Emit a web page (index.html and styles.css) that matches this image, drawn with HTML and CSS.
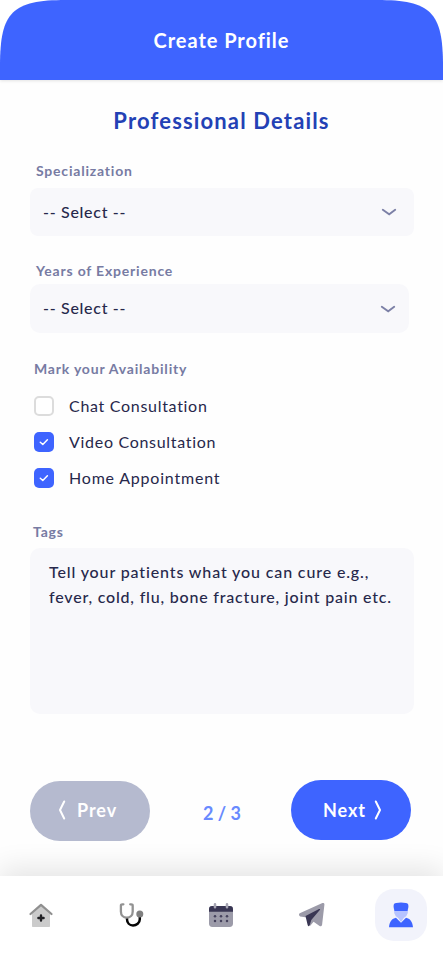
FILE: index.html
```html
<!DOCTYPE html>
<html lang="en">
<head>
<meta charset="utf-8">
<title>Create Profile</title>
<link rel="stylesheet" href="styles.css">
</head>
<body>
<div class="app">
  <header class="topbar-wrap"><div class="topbar"><h1>Create Profile</h1></div></header>
  <main class="form">
    <h2>Professional Details</h2>
    <label class="label spec-label">Specialization</label>
    <div class="select"><span>-- Select --</span>
      <svg class="chev" width="16" height="8" viewBox="0 0 16 8"><path d="M1.8 1.8 8.2 6.3 14.2 1.8"/></svg>
    </div>
    <label class="label years-label">Years of Experience</label>
    <div class="select years"><span>-- Select --</span>
      <svg class="chev" width="16" height="8" viewBox="0 0 16 8"><path d="M1.8 1.8 8.2 6.3 14.2 1.8"/></svg>
    </div>
    <div class="label avail-label">Mark your Availability</div>
    <div class="checks">
      <div class="check"><span class="box"></span><span class="text">Chat Consultation</span></div>
      <div class="check"><span class="box on"><svg width="20" height="20" viewBox="0 0 20 20"><path d="M6.3 10.2 8.8 12.5 13.4 7.8"/></svg></span><span class="text">Video Consultation</span></div>
      <div class="check"><span class="box on"><svg width="20" height="20" viewBox="0 0 20 20"><path d="M6.3 10.2 8.8 12.5 13.4 7.8"/></svg></span><span class="text home">Home Appointment</span></div>
    </div>
    <label class="label tags-label">Tags</label>
    <div class="tags"><p class="line-a">Tell your patients what you can cure e.g.,</p><p class="line-b">fever, cold, flu, bone fracture, joint pain etc.</p></div>
    <div class="pager">
      <div class="btn prev"><svg width="8" height="20" viewBox="0 0 8 20"><path d="M6.2 1.5 2 10 6.2 18.5"/></svg><span>Prev</span></div>
      <span class="count">2 / 3</span>
      <div class="btn next"><span>Next</span><svg width="8" height="20" viewBox="0 0 8 20"><path d="M1.8 1.5 6 10 1.8 18.5"/></svg></div>
    </div>
  </main>
  <nav class="nav">
    <svg width="24" height="24" viewBox="0 0 24 24">
      <path d="M12 2.5 21 10.5V23.2Q21 24 20.2 24H3.8Q3 24 3 23.2V10.5Z" fill="#cbcbcb"/>
      <path d="M1.5 11 12 1.9 22.5 11" fill="none" stroke="#8f8f8f" stroke-width="2.2" stroke-linecap="round" stroke-linejoin="round"/>
      <path d="M12 12.4V17.6M9.4 15H14.6" stroke="#202024" stroke-width="2.4" stroke-linecap="round"/>
    </svg>
    <svg width="26" height="24" viewBox="0 0 26 24">
      <path d="M8 14.5V16.2C8 20 10.6 22.4 14 22.4S20.8 20 20.8 16.2V12.5" fill="none" stroke="#050505" stroke-width="2.5"/>
      <path d="M4.4 1.3H3.4Q1.9 1.3 1.9 2.8V8.5C1.9 12.4 4.4 14.7 7.8 14.7S13.7 12.4 13.7 8.5V2.8Q13.7 1.3 12.2 1.3H11.2" fill="none" stroke="#929292" stroke-width="2.3" stroke-linecap="round"/>
      <circle cx="20.8" cy="11" r="3.5" fill="#808080"/>
    </svg>
    <svg width="24" height="24" viewBox="0 0 24 24">
      <rect x="0" y="3" width="24" height="21" rx="3.4" fill="#9c9ba9"/>
      <path d="M0 8.8V6.2Q0 3 3.3 3H20.7Q24 3 24 6.2V8.8Z" fill="#393653"/>
      <path d="M6 1.4V4.3M18 1.4V4.3" stroke="#a6a5b3" stroke-width="2.6" stroke-linecap="round"/>
      <g fill="#45425c"><circle cx="6" cy="13.2" r="1.25"/><circle cx="12" cy="13.2" r="1.25"/><circle cx="18" cy="13.2" r="1.25"/><circle cx="6" cy="18" r="1.25"/><circle cx="12" cy="18" r="1.25"/><circle cx="18" cy="18" r="1.25"/></g>
    </svg>
    <svg width="26" height="24" viewBox="0 0 26 24">
      <path d="M.7 10.2 23.4.1Q25.6-.5 25.4 1.7L23.1 21.7Q22.6 24 20.6 23.1L14.6 18.7 11 23 8 14.5 1.2 13.5Q-1 12.1.7 10.2Z" fill="#9c9ba9"/>
      <path d="M6.5 13 20 6.1Q21.8 5.6 20.8 7.1L12.3 17 10.7 22.3Q9.7 24 8.7 22.3Z" fill="#393653"/>
    </svg>
    <div class="profile"><svg width="24" height="26" viewBox="0 0 24 26">
      <path d="M5.2 8H18.8V11Q17.8 14.7 14.8 16L12 20 9.2 16Q6.2 14.7 5.2 11Z" fill="#b6c3ff"/>
      <path d="M5.5 9.1Q3 1 7.2 1Q12-.2 16.8 1Q21 1 18.5 9.1Z" fill="#3e64ff"/>
      <path d="M0 25.3C.5 19.5 3 16.5 7 15.7L12 20.7 17 15.7C21 16.5 23.5 19.5 24 25.3Z" fill="#3e64ff"/>
    </svg></div>
  </nav>
</div>
</body>
</html>
```
FILE: styles.css
```css
* { box-sizing: border-box; }
body { margin: 0; background: #fff; font-family: Lato, "Liberation Sans", sans-serif; color: #27284b; }
h1, h2, p { margin: 0; }
.app { width: 443px; height: 956px; display: flex; flex-direction: column; overflow: hidden; background: #fefefe; }
.topbar-wrap { height: 80px; flex: none; background: #fff; box-shadow: 0 1px 3px #0000001c; }
.topbar { height: 80px; display: flex; justify-content: center; background: #3e64ff; color: #fff; clip-path: path("M0 80V66C0 12 12 0 66 0H377C431 0 443 12 443 66V80Z"); }
h1 { font-size: 20px; line-height: 24px; margin-top: 28px; letter-spacing: .95px; white-space: nowrap; }
.form { flex: 1; display: flex; flex-direction: column; padding: 28px 29px 0 30px; }
h2 { font-size: 22px; line-height: 26px; letter-spacing: 1.15px; color: #2341b5; text-align: center; white-space: nowrap; margin-right: 1px; }
.label { font-size: 14px; line-height: 18px; font-weight: 700; color: #777ba3; letter-spacing: .8px; padding-left: 6px; }
.spec-label { margin-top: 28px; }
.select { height: 48px; margin-top: 8px; padding: 0 17px 2px 13px; border-radius: 8px; background: #f8f8fb; display: flex; align-items: center; justify-content: space-between; font-size: 16px; letter-spacing: .7px; font-weight: 500; }
.chev { fill: none; stroke: #7c80a6; stroke-width: 1.9; stroke-linecap: round; margin-top: 2px; }
.years-label { margin-top: 26px; }
.years { height: 49px; margin: 4px 5px 0 0; padding-right: 13px; border-radius: 10px; }
.avail-label { margin-top: 27px; padding-left: 4px; }
.checks { margin: 18px 0 0 4px; display: flex; flex-direction: column; gap: 16px; }
.check { display: flex; align-items: center; height: 20px; gap: 15px; font-size: 16px; letter-spacing: .7px; }
.text { margin-top: -1px; }
.home { letter-spacing: .8px; }
.box { width: 20px; height: 20px; border: 2px solid #dcdcdc; border-radius: 5px; background: #fff; }
.box.on { border: 0; background: #3e64ff; }
.box svg { display: block; fill: none; stroke: #fff; stroke-width: 1.5; stroke-linecap: round; stroke-linejoin: round; }
.tags-label { margin-top: 35px; padding-left: 3px; }
.tags { height: 166px; margin-top: 7px; padding: 11px 0 0 19px; background: #f8f8fb; border-radius: 10px; font-size: 16px; line-height: 25px; font-weight: 500; white-space: nowrap; }
.line-a { letter-spacing: .87px; }
.line-b { letter-spacing: .8px; }
.pager { margin-top: 66px; padding-right: 3px; display: flex; justify-content: space-between; }
.btn { width: 120px; height: 60px; border-radius: 30px; display: flex; align-items: center; font-size: 18px; font-weight: 700; letter-spacing: .95px; color: #fff; }
.btn svg { fill: none; stroke: #fff; stroke-width: 2; stroke-linecap: round; stroke-linejoin: round; }
.prev { background: #b5bacf; margin-top: 1px; padding: 0 0 2px 28px; gap: 11px; }
.prev span { margin-top: -1px; }
.next { background: #3e64ff; padding-left: 32px; gap: 8px; }
.next span { margin-top: -1px; }
.count { margin: 22px 0 0 3px; font-size: 18px; line-height: 22px; font-weight: 700; letter-spacing: 0; color: #688aff; }
.nav { position: relative; height: 80px; flex: none; background: #fff; display: flex; align-items: center; gap: 66px; padding: 0 16px 2px 29px; box-shadow: 0 -8px 28px #0000001a; }
.nav > svg { flex: none; }
.nav > svg:nth-child(2) { margin-right: -2px; }
.profile { flex: none; width: 52px; height: 52px; margin-left: -16px; border-radius: 19px; background: #f2f3fb; display: flex; align-items: center; justify-content: center; }
```
